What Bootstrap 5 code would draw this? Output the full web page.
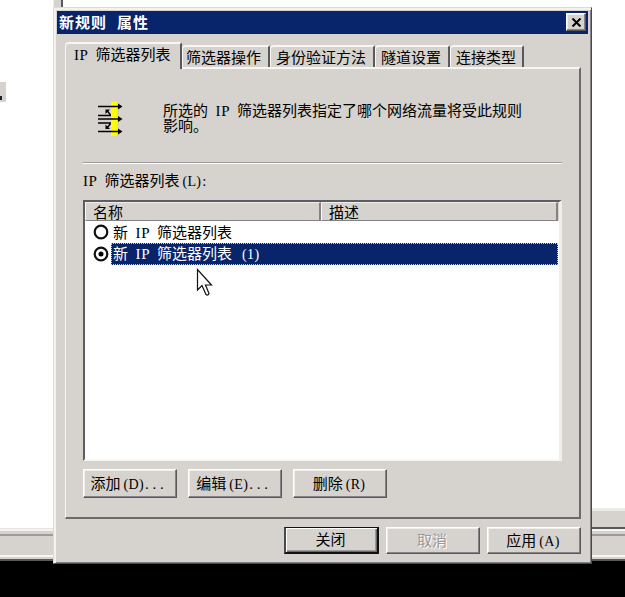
<!DOCTYPE html>
<html lang="zh-CN">
<head>
<meta charset="utf-8">
<meta name="viewport" content="width=device-width, initial-scale=1">
<title>新规则 属性</title>
<link href="https://cdn.jsdelivr.net/npm/bootstrap@5.3.0/dist/css/bootstrap.min.css" rel="stylesheet">
<style>
:root{--face:#d6d3ce;--navy:#08246b;--sh:#848284;--dk:#5a595a}
html,body{height:100%}
body{font:15px/15px "Noto Sans CJK SC",sans-serif;color:#000;background:#000;overflow:hidden}
.desktop{width:625px;height:597px}
.hw{font:15px/0 "Liberation Serif",serif;letter-spacing:.6px;word-spacing:3.2px;white-space:pre}
.key{font-size:14px;margin-left:3px;letter-spacing:.3px}
.dots{font:15px/0 "Liberation Serif",serif;letter-spacing:3.75px;padding-left:1px}
.back-window{height:561px;background:#fff}
.back-left{width:53px}
.back-right{width:34px}
.frag{width:6px;height:20px;margin-top:82px;background:var(--face)}
.frag i{width:2px;height:4px;margin-bottom:2px;background:#222}
.strip-top{height:6px;background:var(--face);border-top:1px solid #e7e5e2;box-shadow:inset 0 2px #f3f2ef}
.strip-mid{height:26px;background:var(--face);border-top:3px solid #eceae7}
.strip-edge{height:2px;background:var(--dk)}
.strip-gap{height:3px}
.status{height:27px;background:var(--face);border-top:2px solid #9c9a9c;border-bottom:2px solid var(--dk)}
.status-line{height:2px;background:#f7f6f4;margin-bottom:2px}
.strip-mid .status-line{margin:0}
.splitter{width:10px;height:8px;background:var(--face);border-left:1px solid #eee;border-right:2px solid var(--dk)}
.dialog{left:53px;top:7px;width:539px;height:557px;background:var(--face);border:1px solid #dedbd6;border-right-color:#4a494a;border-bottom-color:#4a494a;box-shadow:inset 2px 2px #f3f2ef,inset -1px -1px var(--sh);padding:3px 3px 0 3px}
.title-strip{height:23px;background:var(--navy);color:#fff;font-weight:700;padding:0 2px 1px 2px}
.title-strip > span{padding-bottom:2px;letter-spacing:1px}
.title-strip .hw{letter-spacing:3px}
.raised{background:var(--face);border:1px solid #fff;border-right-color:var(--dk);border-bottom-color:var(--dk);box-shadow:inset -1px -1px var(--sh),inset 1px 1px #efeeeb;border-radius:0}
.close-box{width:20px;height:18px;padding:0}
.tabs{height:25px;margin:8px 0 0 8px}
.tab-item{height:22px;border-top:2px solid #f7f6f4;border-left:1px solid #f7f6f4;border-right:2px solid var(--dk);border-radius:4px 2px 0 0;padding:2px 0 0 5px;white-space:nowrap;background:var(--face)}
.tab-item.current{height:27px;width:117px;padding:2px 0 0 8px;position:relative;z-index:2;margin-bottom:-2px}
.tab-item.w2{width:88px;padding-left:3px}.w3{width:105px}.w4{width:75px}.w5{width:74px}
.sheet{width:516px;height:452px;margin-left:8px;border:2px solid #f7f6f4;border-left-width:1px;border-right-color:#6b696b;border-bottom-color:#6b696b;padding:0 17px}
.intro{height:94px;border-bottom:1px solid #9c9a9c;box-shadow:0 1px #fff;padding:33px 0 0 15px}
.intro-text{margin:0 0 0 40px}
.list-label{height:37px;padding-top:9px}
.sunken{height:261px;background:#fff;border:2px solid #5e5c60;border-right:3px solid #efeeeb;border-bottom:2px solid #f7f6f4}
.head-row{height:19px;background:var(--face)}
.head-cell{height:19px;border-top:1px solid #eee;border-right:2px solid var(--sh);border-bottom:1px solid var(--sh);border-left:1px solid #f8f8f8;padding:1px 0 0 7px}
.c1{width:236px}.c2{width:237px}
.line-item{height:22px;padding-left:8px}
.item-text{margin-left:4px;padding-bottom:2px}
.sel{height:22px;margin:0 1px 0 2px;background:var(--navy);color:#fff;outline:1px dotted #d8cf92;outline-offset:-1px;padding:2px 0 0 2px}
.btn-old{width:94px;height:29px;padding:0 2px 3px 0;text-align:center;white-space:nowrap;color:#000;font:15px/15px "Noto Sans CJK SC",sans-serif}
.btn-foot{height:27px}
.btn-def{width:95px;border:2px solid #111;border-top-width:1px;border-left-color:#4a494a;box-shadow:inset 1px 1px #fff,inset -1px -1px #6b696b,inset -2px -2px #9c9a9c}
.dim{color:#9a989a;text-shadow:1px 1px #fff}
.actions{gap:11px;padding-top:8px}
.foot{gap:7px;margin:8px 7px 0 0}
.pointer{left:196px;top:268px}
</style>
</head>
<body>
<div class="desktop position-relative overflow-hidden">
  <div class="back-window d-flex justify-content-between">
    <div class="back-left d-flex flex-column justify-content-between">
      <div class="frag d-flex align-items-end"><i></i></div>
      <div><div class="strip-top"></div><div class="status d-flex flex-column justify-content-end"><div class="status-line"></div></div></div>
    </div>
    <div class="flex-grow-1"><div class="splitter"></div></div>
    <div class="back-right d-flex flex-column justify-content-end">
      <div class="strip-mid d-flex flex-column justify-content-end"><div class="strip-edge"></div><div class="status-line"></div><div class="strip-gap"></div></div>
      <div class="status d-flex flex-column justify-content-end"><div class="status-line"></div></div>
    </div>
  </div>

  <section class="dialog position-absolute">
    <header class="title-strip d-flex align-items-center justify-content-between">
      <span>新规则<span class="hw"> </span>属性</span>
      <button class="raised close-box d-flex align-items-center justify-content-center" aria-label="关闭">
        <svg width="11" height="9" viewBox="0 0 11 9"><path d="M1.5 0.5 9.5 8.5M9.5 0.5 1.5 8.5" stroke="#000" stroke-width="2"/></svg>
      </button>
    </header>

    <nav class="tabs d-flex align-items-end">
      <div class="tab-item current"><span class="hw">IP </span>筛选器列表</div>
      <div class="tab-item w2">筛选器操作</div>
      <div class="tab-item w3">身份验证方法</div>
      <div class="tab-item w4">隧道设置</div>
      <div class="tab-item w5">连接类型</div>
    </nav>

    <main class="sheet">
      <div class="intro d-flex align-items-start">
        <svg width="25" height="35" viewBox="0 0 25 35">
          <path d="M13 0h6v34h-6z" fill="#ff0"/>
          <path d="M0 4.5h21M0 13.500h13M0 17h21M0 21h13M0 29.500h21" stroke="#000" stroke-width="1.300" fill="none"/>
          <path d="M20 1.500l4.500 3-4.500 3zM20 14l4.500 3-4.500 3zM20 26.500l4.500 3-4.500 3zM7.500 7.500h4.500L7.500 12zM7.500 22.500V27h4.500z"/>
          <path d="M9 8.500l3.500 4.500M9 26l3.500-4.500" stroke="#000" stroke-width="1.400"/>
        </svg>
        <div class="intro-text">所选的<span class="hw"> IP </span>筛选器列表指定了哪个网络流量将受此规则<br>影响。</div>
      </div>
      <div class="list-label"><span class="hw">IP </span>筛选器列表<span class="hw key">(L)</span><span class="dots">:</span></div>
      <div class="sunken">
        <div class="head-row d-flex"><div class="head-cell c1">名称</div><div class="head-cell c2">描述</div></div>
        <div class="line-item d-flex align-items-center">
          <svg width="16" height="16" viewBox="0 0 16 16"><circle cx="8" cy="8" r="6.300" fill="#fff" stroke="#111" stroke-width="2.200"/></svg>
          <div class="item-text">新<span class="hw"> IP </span>筛选器列表</div>
        </div>
        <div class="line-item d-flex align-items-center">
          <svg width="16" height="16" viewBox="0 0 16 16"><circle cx="8" cy="8" r="6.300" fill="#fff" stroke="#111" stroke-width="2.200"/><circle cx="8" cy="8" r="2.500"/></svg>
          <div class="sel flex-grow-1">新<span class="hw"> IP </span>筛选器列表<span class="hw key"> (1)</span></div>
        </div>
      </div>
      <div class="d-flex actions">
        <button class="raised btn-old">添加<span class="hw key">(D)</span><span class="dots">...</span></button>
        <button class="raised btn-old">编辑<span class="hw key">(E)</span><span class="dots">...</span></button>
        <button class="raised btn-old">删除<span class="hw key">(R)</span></button>
      </div>
    </main>

    <footer class="d-flex justify-content-end foot">
      <button class="raised btn-old btn-foot btn-def">关闭</button>
      <button class="raised btn-old btn-foot dim">取消</button>
      <button class="raised btn-old btn-foot">应用<span class="hw key">(A)</span></button>
    </footer>
  </section>

  <svg class="pointer position-absolute" width="18" height="30" viewBox="0 0 18 30"><path d="M1.500 1.500V22L6 17.500 10 26.500q2 1.500 3-1L9.500 17H15.500Z" fill="#fff" stroke="#111" stroke-width="1.200"/></svg>
</div>
<script src="https://cdn.jsdelivr.net/npm/bootstrap@5.3.0/dist/js/bootstrap.bundle.min.js"></script>
</body>
</html>
